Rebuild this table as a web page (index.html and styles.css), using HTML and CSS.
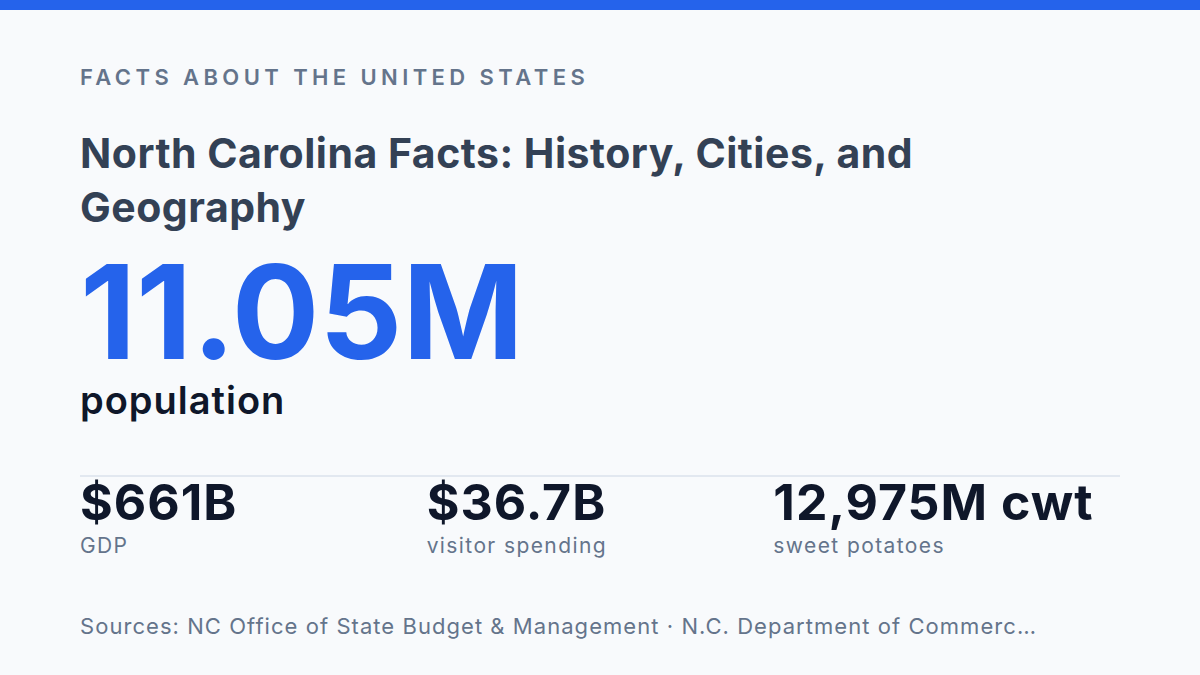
FILE: index.html
```html
<!DOCTYPE html>
<html lang="en">
<head>
<meta charset="utf-8">
<title>North Carolina Facts</title>
<link rel="stylesheet" href="styles.css">
</head>
<body>
<div class="topbar"></div>
<main class="card">
  <div class="eyebrow">FACTS ABOUT THE UNITED STATES</div>
  <h1 class="title">North Carolina Facts: History, Cities, and Geography</h1>
  <div class="hero">11.05M</div>
  <div class="hero-label">population</div>
  <section class="stats">
    <div class="stat">
      <div class="stat-value">$661B</div>
      <div class="stat-label">GDP</div>
    </div>
    <div class="stat">
      <div class="stat-value">$36.7B</div>
      <div class="stat-label">visitor spending</div>
    </div>
    <div class="stat">
      <div class="stat-value">12,975M cwt</div>
      <div class="stat-label">sweet potatoes</div>
    </div>
  </section>
  <div class="sources">Sources: NC Office of State Budget &amp; Management · N.C. Department of Commerc…</div>
</main>
</body>
</html>
```

FILE: styles.css
```css
html, body {
  margin: 0;
  padding: 0;
}
body {
  width: 1200px;
  height: 675px;
  overflow: hidden;
  background: #f8fafc;
  font-family: Inter, "Noto Sans", "Liberation Sans", sans-serif;
}
.topbar {
  height: 10px;
  background: #2563eb;
}
.card {
  padding: 54px 80px 0;
}
.eyebrow {
  font-size: 22px;
  line-height: 26.4px;
  font-weight: 600;
  letter-spacing: 0.2em;
  color: #64748b;
}
.title {
  margin: 36px 0 0;
  font-size: 41px;
  line-height: 54px;
  font-weight: 700;
  letter-spacing: 0.5px;
  color: #334155;
  max-width: 1040px;
}
.hero {
  margin-top: 13px;
  font-size: 130px;
  line-height: 130px;
  font-weight: 700;
  color: #2563eb;
}
.hero-label {
  margin-top: 1px;
  font-size: 38px;
  line-height: 45.6px;
  font-weight: 600;
  letter-spacing: 1px;
  color: #0f172a;
}
.stats {
  margin-top: 51px;
  border-top: 2px solid #e2e8f0;
  display: grid;
  grid-template-columns: repeat(3, 1fr);
}
.stat-value {
  font-size: 50px;
  line-height: 50px;
  font-weight: 700;
  letter-spacing: 1px;
  color: #0f172a;
}
.stat-label {
  margin-top: 6px;
  font-size: 21px;
  line-height: 26px;
  letter-spacing: 1.4px;
  color: #64748b;
}
.sources {
  margin-top: 54px;
  font-size: 22px;
  line-height: 26.4px;
  letter-spacing: 1.05px;
  color: #64748b;
  white-space: nowrap;
}
```
